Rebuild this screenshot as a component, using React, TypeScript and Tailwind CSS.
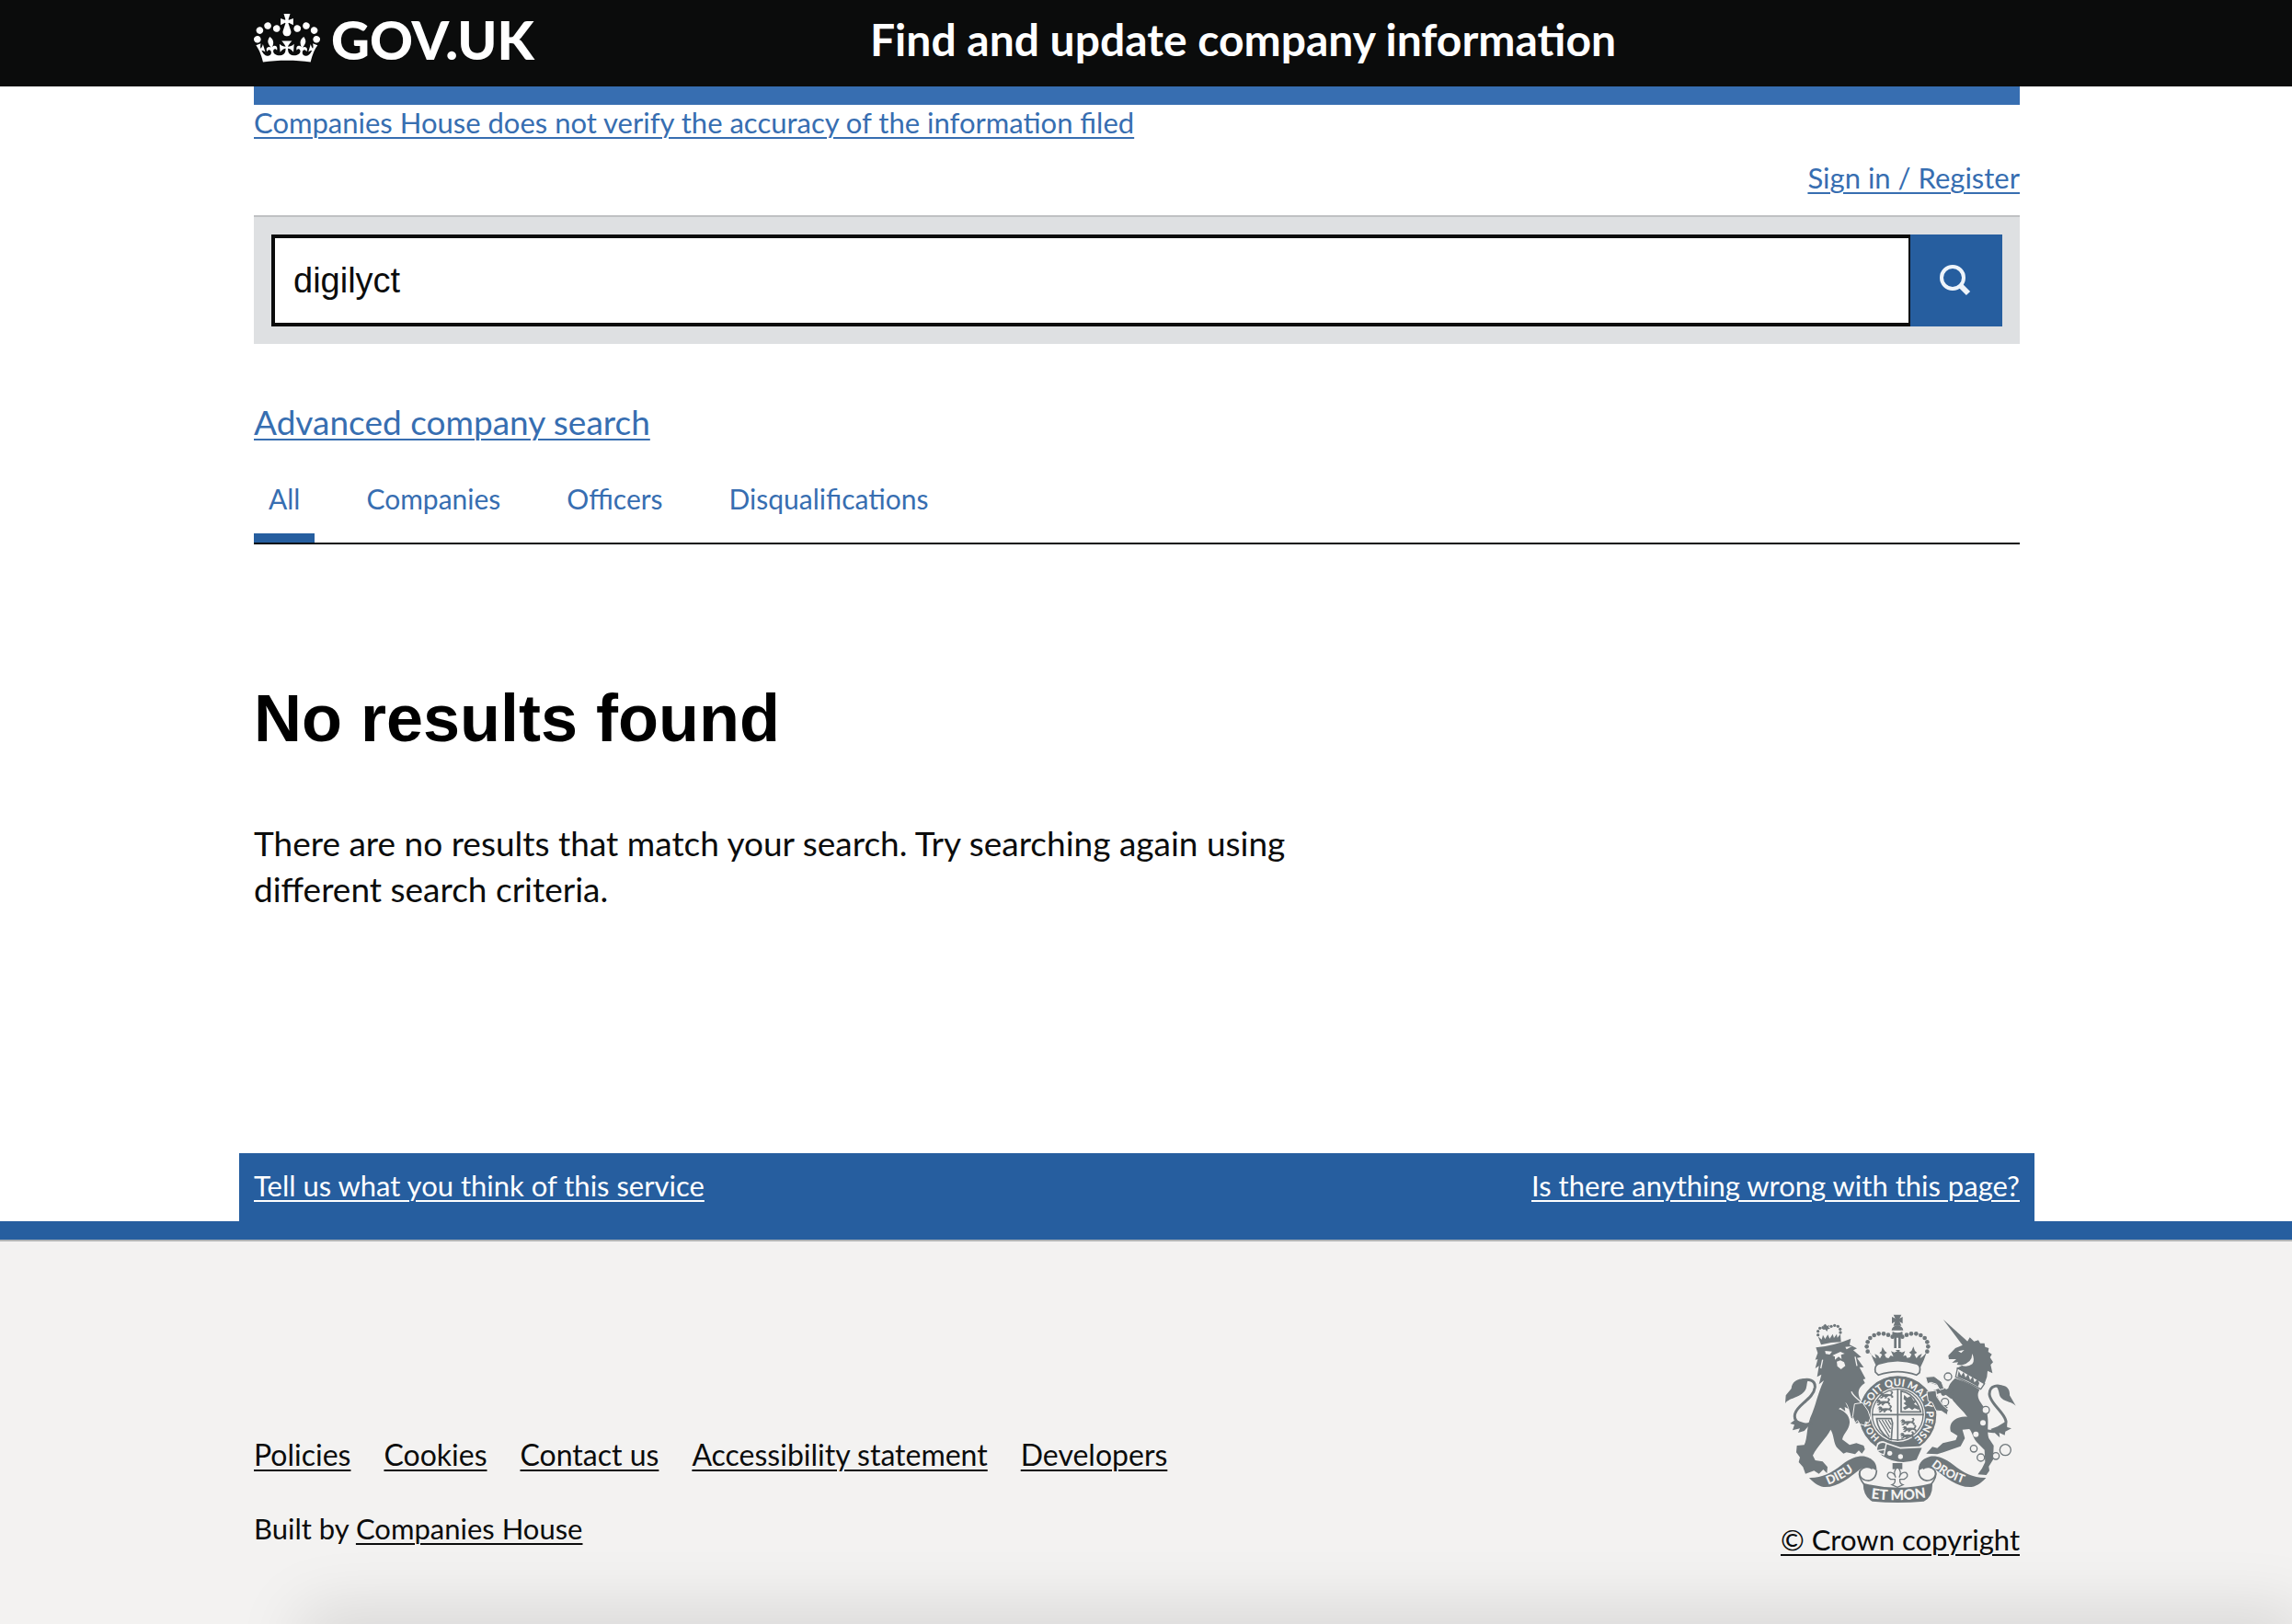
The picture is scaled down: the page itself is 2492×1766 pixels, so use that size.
import React, { useState } from 'react';

interface NavItem {
    label: string;
    href: string;
}

const TABS: NavItem[] = [
    { label: 'All', href: '#all' },
    { label: 'Companies', href: '#companies' },
    { label: 'Officers', href: '#officers' },
    { label: 'Disqualifications', href: '#disqualifications' },
];

const FOOTER_LINKS: NavItem[] = [
    { label: 'Policies', href: '#policies' },
    { label: 'Cookies', href: '#cookies' },
    { label: 'Contact us', href: '#contact' },
    { label: 'Accessibility statement', href: '#accessibility' },
    { label: 'Developers', href: '#developers' },
];

// Beads on the left arch of the crest crown, mirrored for the right one
const CROWN_BEADS = [
    [440, 131], [426, 125], [411, 121], [395, 121], [380, 126], [367, 135], [359, 148], [356, 163], [359, 179],
];

const link = 'underline decoration-2 underline-offset-4';

function Crown() {
    return (
        <svg viewBox="0 0 132 97" className="h-[53px] w-[72px]" fill="currentColor" aria-hidden="true">
            <path d="M25 30.2c3.5 1.5 7.7-.2 9.1-3.7 1.5-3.6-.2-7.8-3.9-9.2-3.6-1.4-7.6.3-9.1 3.9-1.4 3.5.3 7.5 3.9 9zM9 39.5c3.6 1.5 7.8-.2 9.2-3.7 1.5-3.6-.2-7.8-3.9-9.1-3.6-1.5-7.6.2-9.1 3.8-1.4 3.5.3 7.5 3.8 9zM4.4 57.2c3.5 1.5 7.7-.2 9.1-3.8 1.5-3.6-.2-7.7-3.9-9.1-3.5-1.5-7.6.3-9.1 3.8-1.4 3.5.3 7.6 3.9 9.1zm38.3-21.4c3.5 1.5 7.7-.2 9.1-3.8 1.5-3.6-.2-7.7-3.9-9.1-3.6-1.5-7.6.3-9.1 3.8-1.3 3.6.4 7.7 3.9 9.1zm64.4-5.6c-3.6 1.5-7.8-.2-9.1-3.7-1.5-3.6.2-7.8 3.8-9.2 3.6-1.4 7.7.3 9.2 3.9 1.3 3.5-.4 7.5-3.9 9zm15.9 9.3c-3.6 1.5-7.7-.2-9.1-3.7-1.5-3.6.2-7.8 3.7-9.1 3.6-1.5 7.7.2 9.2 3.8 1.5 3.5-.3 7.5-3.8 9zm4.7 17.7c-3.6 1.5-7.8-.2-9.2-3.8-1.5-3.6.2-7.7 3.9-9.1 3.6-1.5 7.7.3 9.2 3.8 1.3 3.5-.4 7.6-3.9 9.1zM89.3 35.8c-3.6 1.5-7.8-.2-9.2-3.8-1.4-3.6.2-7.7 3.9-9.1 3.6-1.5 7.7.3 9.2 3.8 1.4 3.6-.3 7.7-3.9 9.1zM69.7 17.7l8.9 4.7V9.3l-8.9 2.8c-.2-.3-.5-.6-.9-.9L72.4 0H59.6l3.5 11.2c-.3.3-.6.5-.9.9l-8.8-2.8v13.1l8.8-4.7c.3.3.6.7.9.9l-5 15.4v.1c-.2.8-.4 1.6-.4 2.4 0 4.1 3.1 7.5 7 8.1h.2c.3 0 .7.1 1 .1.4 0 .7 0 1-.1h.2c4-.6 7.1-4.1 7.1-8.1 0-.8-.1-1.7-.4-2.4V34l-5.1-15.4c.4-.2.7-.6 1-.9zM66 92.8c16.9 0 32.8 1.1 47.1 3.2 4-16.9 8.9-26.7 14-33.5l-9.6-3.4c1 4.9 1.1 7.2 0 10.2-1.5-1.4-3-4.3-4.2-8.7L108.6 76c2.8-2 5-3.2 7.5-3.3-4.4 9.4-10 11.9-13.6 11.2-4.3-.8-6.3-4.6-5.6-7.9 1-4.7 5.7-5.9 8-.5 4.3-8.7-3-11.4-7.6-8.8 7.1-7.2 7.9-13.5 2.1-21.1-8 6.1-8.1 12.3-4.5 20.8-4.7-5.4-12.1-2.5-9.5 6.2 3.4-5.2 7.9-2 7.2 3.1-.6 4.3-6.4 7.8-13.5 7.2-10.3-.9-10.9-8-11.2-13.8 2.5-.5 7.1 1.8 11 7.3L80.2 60c-4.1 4.4-8 5.3-12.3 5.4 1.4-4.4 8-11.6 8-11.6H55.5s6.4 7.2 7.9 11.6c-4.2-.1-8-1-12.3-5.4l1.4 16.4c3.9-5.5 8.5-7.7 10.9-7.3-.3 5.8-.9 12.8-11.1 13.8-7.2.6-12.9-2.9-13.5-7.2-.7-5 3.8-8.3 7.1-3.1 2.7-8.7-4.6-11.6-9.4-6.2 3.7-8.5 3.6-14.7-4.6-20.8-5.8 7.6-5 13.9 2.2 21.1-4.7-2.6-11.9.1-7.7 8.8 2.3-5.5 7.1-4.2 8.1.5.7 3.3-1.3 7.1-5.7 7.9-3.5.7-9-1.8-13.5-11.2 2.5.1 4.7 1.3 7.5 3.3l-4.7-15.4c-1.2 4.4-2.7 7.2-4.3 8.7-1.1-3-.9-5.3 0-10.2l-9.5 3.4c5 6.9 9.9 16.7 14 33.5 14.8-2.1 30.8-3.2 47.7-3.2z" />
        </svg>
    );
}

// Passant lion, three of them stack in a quarter of the shield
function SmallLion({ x, y }: { x: number; y: number }) {
    return (
        <path
            transform={`translate(${x} ${y}) scale(0.92)`}
            d="M0 4l5-4 7 2 2 5 12-1 12 1 4-6-6-4 8-2 4 6-5 9 5 3v6l-6 1-1-5-8-2-7 4-3 5-6-1 3-5-7 1-5 5-7-1 2-4 4-1 2-4-6 2-4-2 5-3-3-3-5 2z"
        />
    );
}

function RibbonEnd() {
    return (
        <>
            <path d="M388 566C388 588 374 602 358 600C338 598 326 580 336 566C344 556 362 552 374 562" fill="#f3f2f1" stroke="#6f777b" strokeWidth="5" />
            <path d="M168 591C210 592 240 575 275 548C310 522 335 518 352 522C380 530 390 548 388 568L374 560C360 554 345 556 330 566C300 590 260 624 215 621C195 618 180 604 168 591Z" />
            <path d="M334 568C326 586 338 602 350 616" fill="none" stroke="#6f777b" strokeWidth="5" />
        </>
    );
}

function Crest() {
    return (
        <svg viewBox="84 54 762 624" className="h-[208px] w-[254px]" fill="#6f777b" aria-hidden="true">
            <defs>
                <path id="garter-arc" d="M366 360A94 94 0 1 1 510 463" />
                <path id="garter-foot" d="M399 459A94 94 0 0 1 363 380" />
                <path id="ribbon-left" d="M230 614Q288 592 338 550" />
                <path id="ribbon-mid" d="M370 658Q457 670 552 655" />
                <path id="ribbon-right" d="M566 552Q616 594 692 616" />
            </defs>

            {/* Crown */}
            <path d="M443 59h26l-6 12 10-5v22l-10-6 6 13h-26l5-13-10 6V66l11 5z" />
            <path d="M437 110a19 16 0 0 1 38 0z" />
            <path d="M440 114q16 8 32 0l1 10-6 8v36h-8v-34h-6v34h-8v-36l-6-8z" />
            {CROWN_BEADS.map(([x, y]) => (
                <React.Fragment key={`${x}-${y}`}>
                    <circle cx={x} cy={y} r="7" />
                    <circle cx={912 - x} cy={y} r="7" />
                </React.Fragment>
            ))}
            <path d="M365 184l14 13 8 5-5-15 11 6 6 9 7-13-9-5 7-6 3-14 8 14 7 5-8 6 5 10 8 2 7-9 9 4-8-18 11 4 10-4h-1l-6-4h16l-4 4 10 4 10-4-6 16 8-3 5 9 9-2 5-10-8-6 8-5 6-14 5 14 7 6-9 5 7 13 7-9 11-6-6 15 8-5 13-13q-8 25-20 48-70-25-142 0-12-24-20-46z" />
            <path d="M384 246q-4-20 10-26 62-22 126 0 14 6 8 28l-10 8q-60-22-124 0z" fill="#f3f2f1" stroke="#6f777b" strokeWidth="5" />

            {/* Lion */}
            <path d="M207 157l-10-27 12 10 4-15 7 13 9-14 6 13 10-15 4 13 9-13 2 12 10-12 2 26q-32 0-65 9z" />
            <path d="M221 89l6 7 7-4-3 8 6 5-8 1-3 8-5-7-9 1 5-6-3-8z" />
            {[[197, 125], [197, 113], [203, 103], [213, 101], [240, 97], [251, 94], [262, 97], [269, 106], [270, 117]].map(([x, y]) => (
                <circle key={`${x}-${y}`} cx={x} cy={y} r="5" />
            ))}
            <path d="M190 166Q250 160 304 137L300 157 324 169 312 175 338 197 324 200 346 231 332 230 352 268 344 270 350 282C334 292 322 308 334 334L362 378 358 410 346 418 332 410 320 414 320 400 306 396C300 375 296 352 286 344L296 366 284 360 286 374 270 362 262 368 250 362C282 368 302 388 300 412C298 436 280 446 276 466L300 484 322 478 346 486 350 498 340 512 330 502 318 514 290 508 280 512 262 496C246 480 250 450 238 434C224 462 194 488 180 518L188 534 212 538 228 556 226 576 214 564 200 578 184 568 156 578 148 556 134 540 138 524 126 508 128 486 152 484C164 460 158 420 178 380C190 350 200 306 216 274L200 286 208 254 194 262 200 226 188 234 196 204 188 206 196 184Z" />
            <path d="M220 177l23 2-8 10-13-2zM286 164l22-2-18 10z" fill="#f3f2f1" />
            <path d="M244 192l26-12 14 6-12 4 2 14-10-8-12 10 0-10z" fill="#f3f2f1" />
            <path d="M258 212l12-4 12 6 4 12-14 11-12-10z" fill="#f3f2f1" />
            <path d="M306 310C314 332 338 338 352 360M212 206l-6 28M318 196l6 30" fill="none" stroke="#f3f2f1" strokeWidth="4" />
            <path d="M176 412C140 428 116 405 122 382C130 352 182 334 187 296C189 272 165 268 146 273" fill="none" stroke="#6f777b" strokeWidth="9" />
            <path d="M168 268C130 264 112 278 110 300L92 322 90 348C104 328 146 330 158 300C162 286 160 276 168 268ZM122 402L106 414 120 418 114 436 138 430 132 444 152 438 170 418Z" />

            {/* Unicorn */}
            <path d="M605 74L689 150 671 162Z" />
            <path d="M692 133L706 146 720 142 726 152 740 152 742 164 754 168 752 180 764 188 758 198 768 214 760 222 766 250 750 242 748 262 740 284 700 266 648 234 668 224 650 222 654 214 634 216 648 204 624 204 622 192 645 168 680 154Z" />
            <path d="M654 178l20-4-10 10zM700 186q0 30-36 38 20 8 36-4 10-12 0-34z" fill="#f3f2f1" />
            <path d="M652 233L740 284 728 302Q696 284 646 262Z" fill="#f3f2f1" stroke="#6f777b" strokeWidth="4" />
            <path d="M652 262l4-20 8 16 8-12 6 18 9-12 6 20 9-12 5 20 10-10 6 12-4 12q-34-20-67-32z" />
            <path d="M644 266Q694 282 724 304C706 334 738 350 748 380C756 412 746 436 754 462L770 486 768 532 754 554 756 568 746 582 718 580 732 560 742 540 740 500 714 474C700 456 698 436 690 432L668 434 676 462 662 488 606 508 586 514 550 512 570 490 586 494 604 478 646 468 652 454 630 440C620 410 650 388 684 392C664 364 636 346 626 318C616 300 624 284 644 266Z" />
            <g fill="none" stroke="#6f777b" strokeLinejoin="round">
                <path d="M636 300L606 316 594 284 560 272" strokeWidth="15" />
                <path d="M636 328L604 304 572 314 590 350 616 368" strokeWidth="15" />
            </g>
            <path d="M740 436C790 448 812 430 810 406C804 376 758 350 756 318C756 288 786 284 806 302" fill="none" stroke="#6f777b" strokeWidth="9" />
            <path d="M776 290C810 284 824 300 822 322L842 356C826 340 800 344 790 324C786 310 786 300 776 290ZM760 432L782 424 812 406 814 426 828 430 808 440 806 452 788 444 790 460Z" />
            {[[621, 261, 12], [611, 344, 12], [744, 370, 12], [705, 496, 11], [728, 525, 12], [777, 520, 11], [808, 500, 18]].map(([x, y, r]) => (
                <circle key={`${x}-${y}`} cx={x} cy={y} r={r} fill="#f3f2f1" stroke="#6f777b" strokeWidth="4" />
            ))}
            <circle cx="735" cy="412" r="9" fill="#f3f2f1" />
            <circle cx="712" cy="449" r="9" fill="#f3f2f1" />

            {/* Garter */}
            <circle cx="457" cy="385" r="128" stroke="#f3f2f1" strokeWidth="4" />
            <circle cx="457" cy="385" r="89" fill="#f3f2f1" />
            <circle cx="457" cy="385" r="83" fill="none" stroke="#6f777b" strokeWidth="4" />
            <path d="M457 301v169M374 385h168" stroke="#6f777b" strokeWidth="5" />
            <SmallLion x={398} y={312} />
            <SmallLion x={388} y={335} />
            <SmallLion x={394} y={358} />
            <SmallLion x={468} y={400} />
            <SmallLion x={474} y={422} />
            <SmallLion x={466} y={444} />
            <path d="M468 308Q514 316 532 376H468Z" fill="none" stroke="#6f777b" strokeWidth="5" />
            <path d="M478 320l10 10 12-6 8 14 10 4-8 8 14 8 2 12-14-6-8 6-10-8-14 8-6-8 12-6-10-8 8-6-8-8z" />
            <path d="M388 398h48l4 14-4 54-8-2q-36-26-40-66z" fill="none" stroke="#6f777b" strokeWidth="5" />
            <path d="M396 402l34 56M406 402l26 42M416 402l18 30M426 402l10 16" stroke="#6f777b" strokeWidth="4" />
            <g fill="#f3f2f1" fontFamily="Lato, 'Liberation Sans', sans-serif" fontWeight="900">
                <text fontSize="33"><textPath href="#garter-arc">SOIT QUI MAL Y PENSE</textPath></text>
                <text fontSize="30"><textPath href="#garter-foot">HONI</textPath></text>
            </g>

            {/* Paws and hooves over the garter */}
            <path d="M316 350L342 346 360 372 368 396 362 412 352 408 350 420 334 416 326 404 318 412 310 392Z" stroke="#f3f2f1" strokeWidth="3" />
            <path d="M548 262L576 260 600 278 608 300 594 304 584 286 566 280 554 284Z" stroke="#f3f2f1" strokeWidth="3" />
            <path d="M552 310L582 306 584 326 604 354 622 370 618 386 600 374 582 372 570 346 556 340Z" stroke="#f3f2f1" strokeWidth="3" />

            {/* Buckle strap */}
            <path d="M392 480Q402 470 418 478L466 494 540 490L520 534Q460 556 404 520 384 504 392 480Z" stroke="#f3f2f1" strokeWidth="5" />
            <path d="M392 482Q404 470 420 478L412 516Q388 510 388 496ZM392 502l24-4" stroke="#f3f2f1" strokeWidth="4" />
            <circle cx="431" cy="511" r="8" fill="#f3f2f1" />
            <circle cx="466" cy="522" r="8" fill="#f3f2f1" />

            {/* Ribbon and fleur-de-lis */}
            <path d="M440 543h32v20h-32z" />
            <path d="M456 556q16 14 6 34 6-20 22-16 12 12-6 22h-14q-2 14 10 18l-18 8-18-8q12-4 10-18h-14q-18-10-6-22 16-4 22 16-10-20 6-34z" fill="#f3f2f1" stroke="#6f777b" strokeWidth="4" />
            <RibbonEnd />
            <g transform="translate(913 0) scale(-1 1)">
                <RibbonEnd />
            </g>
            <path d="M344 608Q457 638 570 608Q572 656 542 668Q457 676 374 668Q344 652 344 608Z" />
            <g fill="#f3f2f1" fontFamily="Lato, 'Liberation Sans', sans-serif" fontWeight="900">
                <text fontSize="40"><textPath href="#ribbon-left">DIEU</textPath></text>
                <text fontSize="46"><textPath href="#ribbon-mid">ET MON</textPath></text>
                <text fontSize="38"><textPath href="#ribbon-right">DROIT</textPath></text>
            </g>
        </svg>
    );
}

function Header() {
    return (
        <header className="bg-[#0b0c0c] pr-5 text-white">
            <div className="mx-auto flex h-[94px] max-w-[1920px] items-start">
                <a href="#home" className="flex w-[670px] shrink-0 items-start gap-3 pt-[15px]">
                    <Crown />
                    <span className="text-[58px] leading-[56px] font-black">GOV.UK</span>
                </a>
                <a href="#search" className="pt-[15px] text-[48px] leading-[56px] font-bold">
                    Find and update company information
                </a>
            </div>
        </header>
    );
}

function SearchForm() {
    const [query, setQuery] = useState('digilyct');

    return (
        <form
            onSubmit={(e) => e.preventDefault()}
            className="flex border-t-2 border-[#bfc1c3] bg-[#dee0e2] p-[19px]"
        >
            <input
                type="text"
                aria-label="Search"
                value={query}
                onChange={(e) => setQuery(e.target.value)}
                className="h-[100px] min-w-0 flex-1 border-4 border-r-2 border-[#0b0c0c] bg-white px-5 font-['Liberation_Sans',sans-serif] text-[38px] text-[#0b0c0c] outline-none"
            />
            <button
                type="submit"
                aria-label="Submit search"
                className="flex size-[100px] cursor-pointer items-center justify-center bg-[#265e9f] text-[#eef4fa]"
            >
                <svg viewBox="0 0 36 36" className="size-9" fill="none" stroke="currentColor" aria-hidden="true">
                    <circle cx="14" cy="15" r="12" strokeWidth="4" />
                    <path d="M22 23l9 9" strokeWidth="6" />
                </svg>
            </button>
        </form>
    );
}

export default function App() {
    const [activeTab, setActiveTab] = useState('All');

    return (
        <div className="flex min-h-screen flex-col bg-white font-['Lato','Liberation_Sans',sans-serif] text-[#0b0c0c]">
            <Header />

            <div className="pr-5">
                <div className="mx-auto max-w-[1920px]">
                    <div className="h-5 bg-[#376eb1]" />
                    <div className="text-[31px] leading-[38px] text-[#376eb1]">
                        <a href="#accuracy" className={link}>
                            Companies House does not verify the accuracy of the information filed
                        </a>
                        <div className="my-[22px] text-right">
                            <a href="#signin" className={link}>Sign in / Register</a>
                        </div>
                    </div>

                    <SearchForm />

                    <main>
                        <div className="pt-[60px] text-[37px] leading-[50px] text-[#376eb1]">
                            <a href="#advanced" className={link}>Advanced company search</a>
                        </div>

                        <nav className="mt-[38px] flex gap-10 border-b-2 border-[#0b0c0c] text-[30px] leading-10">
                            {TABS.map((tab) => (
                                <a
                                    key={tab.label}
                                    href={tab.href}
                                    onClick={() => setActiveTab(tab.label)}
                                    className={`border-b-10 px-4 pb-[18px] text-[#376eb1] ${activeTab === tab.label ? 'border-[#265e9f]' : 'border-transparent'}`}
                                >
                                    {tab.label}
                                </a>
                            ))}
                        </nav>

                        <h1 className="pt-[149px] font-['Liberation_Sans',sans-serif] text-[72px] leading-[80px] font-bold text-black">
                            No results found
                        </h1>
                        <p className="max-w-[1180px] pt-[71px] pb-[262px] text-[37px] leading-[50px]">
                            There are no results that match your search. Try searching again using different search
                            criteria.
                        </p>
                    </main>
                </div>

                <div className="mx-auto flex max-w-[1952px] justify-between bg-[#265e9f] px-4 pt-[15px] pb-[19px] text-[31px] leading-10 text-white">
                    <a href="#feedback" className={link}>Tell us what you think of this service</a>
                    <a href="#problem" className={link}>Is there anything wrong with this page?</a>
                </div>
            </div>

            <div className="h-5 bg-[#265e9f]" />
            <footer className="relative flex-1 overflow-hidden border-t-2 border-[#b1b4b6] bg-[#f3f2f1] pt-[78px] pr-5 text-[31px] leading-10">
                <div className="mx-auto flex max-w-[1920px] items-end justify-between">
                    <div className="pb-3">
                        <ul className="flex gap-9 text-[32px]">
                            {FOOTER_LINKS.map((item) => (
                                <li key={item.label}>
                                    <a href={item.href} className={link}>{item.label}</a>
                                </li>
                            ))}
                        </ul>
                        <p className="pt-10">
                            Built by <a href="#companies-house" className={link}>Companies House</a>
                        </p>
                    </div>
                    <a href="#crown" className={`${link} flex flex-col items-center gap-[18px]`}>
                        <Crest />
                        © Crown copyright
                    </a>
                </div>
                {/* Soft shadow along the bottom edge */}
                <div className="absolute right-0 -bottom-10 left-[340px] h-10 shadow-[0_0_72px_12px_rgba(0,0,0,0.13)]" />
            </footer>
        </div>
    );
}
